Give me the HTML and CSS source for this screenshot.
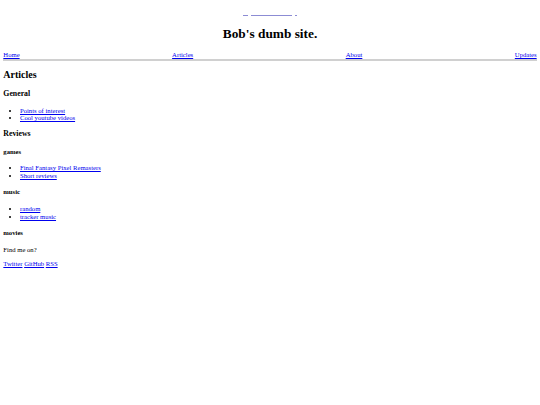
FILE: index.html
```html
<!DOCTYPE html>
<html>
<head>
<meta charset="utf-8">
<title>Bob's dumb site.</title>
<link rel="stylesheet" href="styles.css">
</head>
<body>
<header class="site-header">
  <div class="logo-row">
    <a href="#" class="logo-link"><span class="seg seg-a"></span><span class="seg seg-b"></span><span class="seg seg-c"></span></a>
  </div>
  <h1 class="site-title">Bob's dumb site.</h1>
  <nav class="nav">
    <a href="#">Home</a>
    <a href="#">Articles</a>
    <a href="#">About</a>
    <a href="#">Updates</a>
  </nav>
</header>
<main>
  <h2 class="page-title">Articles</h2>
  <h3>General</h3>
  <ul>
    <li><a href="#">Points of interest</a></li>
    <li><a href="#">Cool youtube videos</a></li>
  </ul>
  <h3>Reviews</h3>
  <h4>games</h4>
  <ul>
    <li><a href="#">Final Fantasy Pixel Remasters</a></li>
    <li><a href="#">Short reviews</a></li>
  </ul>
  <h4>music</h4>
  <ul>
    <li><a href="#">random</a></li>
    <li><a href="#">tracker music</a></li>
  </ul>
  <h4>movies</h4>
</main>
<footer>
  <p>Find me on?</p>
  <p><a href="#">Twitter</a> <a href="#">GitHub</a> <a href="#">RSS</a></p>
</footer>
</body>
</html>
```
FILE: styles.css
```css
html { background: #fff; }
body {
  margin: 3.33px;
  font-family: "Liberation Serif", "Times New Roman", serif;
  font-size: 6.67px;
  line-height: 1.15;
  color: #000;
}
a { color: #0000ee; }
.logo-row {
  display: flex;
  justify-content: center;
  align-items: flex-end;
  height: 12.7px;
}
.logo-link {
  display: flex;
  gap: 3px;
  align-items: flex-end;
}
.seg {
  display: block;
  height: 5px;
  border-bottom: 1px solid #8c8cd4;
}
.seg-a { width: 5px; }
.seg-b { width: 41px; }
.seg-c { width: 2px; }
.site-title {
  text-align: center;
  font-size: 2em;
  margin: 9.9px 0;
}
.nav {
  display: flex;
  justify-content: space-between;
  border-bottom: 2px solid #d0d0d0;
}
h2 { font-size: 1.5em; margin: 0.83em 0; }
.page-title { margin-bottom: 9.3px; }
h3 { font-size: 1.17em; margin: 1em 0; }
h4 { font-size: 1em; margin: 1.33em 0; }
ul { margin: 1em 0; padding-left: 16.67px; }
p { margin: 1em 0; }
```
